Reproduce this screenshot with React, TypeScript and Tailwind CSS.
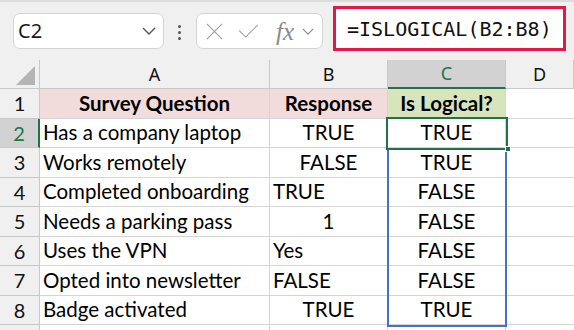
import React from "react"

const cols = ["A", "B", "C", "D"]

type Cell = { v: string; align: "left" | "center" }

const rows: { q: string; r: Cell; c: string }[] = [
  { q: "Has a company laptop", r: { v: "TRUE", align: "center" }, c: "TRUE" },
  { q: "Works remotely", r: { v: "FALSE", align: "center" }, c: "TRUE" },
  { q: "Completed onboarding", r: { v: "TRUE", align: "left" }, c: "FALSE" },
  { q: "Needs a parking pass", r: { v: "1", align: "center" }, c: "FALSE" },
  { q: "Uses the VPN", r: { v: "Yes", align: "left" }, c: "FALSE" },
  { q: "Opted into newsletter", r: { v: "FALSE", align: "left" }, c: "FALSE" },
  { q: "Badge activated", r: { v: "TRUE", align: "center" }, c: "TRUE" },
]

const cellFont = { fontFamily: "Lato, 'Open Sans', sans-serif" }

const Chevron = ({ className }: { className?: string }) => (
  <svg viewBox="0 0 14 8" className={className} fill="none" stroke="currentColor" strokeWidth="1.4">
    <path d="M1 1l6 6 6-6" />
  </svg>
)

const FormulaBar = () => (
  <div className="relative h-[60px] bg-[#f0f0f0] flex items-center border-t-2 border-[#dcdcdc]">
    <div className="absolute left-[13px] top-[11px] w-[151px] h-[36px] bg-white border border-[#d4d4d4] rounded-[7px] flex items-center justify-between pl-[4px] pr-[7px]">
      <span className="text-[20px] text-[#1a1a1a] font-['Noto_Sans',sans-serif]">C2</span>
      <Chevron className="w-[14px] h-[8px] text-[#555]" />
    </div>
    <div className="absolute left-[178px] top-[23px] flex flex-col gap-[3px]">
      <span className="w-[3px] h-[3px] rounded-full bg-[#555]" />
      <span className="w-[3px] h-[3px] rounded-full bg-[#555]" />
      <span className="w-[3px] h-[3px] rounded-full bg-[#555]" />
    </div>
    <div className="absolute left-[196px] top-[11px] w-[127px] h-[36px] bg-white border border-[#d4d4d4] rounded-[7px] flex items-center pl-[9px]">
      <svg viewBox="0 0 18 18" className="w-[17px] h-[17px]" fill="none" stroke="#a0a0a0" strokeWidth="1.2">
        <path d="M1 1l16 16M17 1L1 17" />
      </svg>
      <svg viewBox="0 0 22 15" className="w-[21px] h-[14px] ml-[15px]" fill="none" stroke="#a0a0a0" strokeWidth="1.2">
        <path d="M1 7l7 7L21 1" />
      </svg>
      <span className="ml-[17px] text-[25px] italic text-[#8a8a8a] leading-none" style={{ fontFamily: "'Liberation Serif', serif" }}>fx</span>
      <Chevron className="w-[12px] h-[7px] text-[#8a8a8a] ml-[8px]" />
    </div>
    <div className="absolute left-[333px] top-[4px] w-[233px] h-[45px] bg-white border-[3px] border-[#e0194a] flex items-center pl-[11px]">
      <span className="text-[20px] text-[#111]" style={{ fontFamily: "'DejaVu Sans Mono', monospace" }}>=ISLOGICAL(B2:B8)</span>
    </div>
  </div>
)

export default function App() {
  return (
    <div className="w-[574px] h-[330px] overflow-hidden bg-white">
      <FormulaBar />
      <div className="relative">
        <div className="grid" style={{ gridTemplateColumns: "40px 230px 118px 118px 68px", gridTemplateRows: "29px repeat(8, 29.5px) 20px" }}>
          <div className="bg-[#f0f0f0] border-r border-b border-[#c8c8c8] relative">
            <svg viewBox="0 0 20 20" className="absolute left-[16px] top-[6px] w-[19px] h-[19px]">
              <polygon points="20,0 20,20 0,20" fill="#b4b4b4" />
            </svg>
          </div>
          {cols.map((c) => (
            <div
              key={c}
              className={
                c === "C"
                  ? "bg-[#d2d2d2] border-r border-[#c8c8c8] border-b-2 border-b-[#217346] flex items-center justify-center text-[#217346] text-[18px]"
                  : "bg-[#f0f0f0] border-r border-b border-[#c8c8c8] flex items-center justify-center text-[#111] text-[18px]"
              }
              style={{ fontFamily: "'Noto Sans', sans-serif" }}
            >
              {c}
            </div>
          ))}

          <div className="bg-[#f0f0f0] border-r border-b border-[#c8c8c8] flex items-center justify-center text-[20px] text-[#111]" style={cellFont}>1</div>
          <div className="bg-[#f2dcdb] border-r border-b border-[#d4d4d4] flex items-center justify-center font-bold text-[20.5px]" style={cellFont}>Survey Question</div>
          <div className="bg-[#f2dcdb] border-r border-b border-[#d4d4d4] flex items-center justify-center font-bold text-[20.5px]" style={cellFont}>Response</div>
          <div className="bg-[#d8e4bc] border-r border-b border-[#d4d4d4] flex items-center justify-center font-bold text-[20.5px]" style={cellFont}>Is Logical?</div>
          <div className="border-b border-[#d4d4d4]" />

          {rows.map((row, i) => {
            const n = i + 2
            const sel = n === 2
            return (
              <React.Fragment key={n}>
                <div
                  className={
                    sel
                      ? "bg-[#d2d2d2] border-r-2 border-r-[#217346] border-b border-b-[#c8c8c8] flex items-center justify-center text-[20px] text-[#217346]"
                      : "bg-[#f0f0f0] border-r border-b border-[#c8c8c8] flex items-center justify-center text-[20px] text-[#111]"
                  }
                  style={cellFont}
                >
                  {n}
                </div>
                <div className="border-r border-b border-[#d4d4d4] flex items-center pl-[3px] text-[20.5px] text-black" style={cellFont}>{row.q}</div>
                <div
                  className={
                    "border-r border-b border-[#d4d4d4] flex items-center text-[20.5px] text-black " +
                    (row.r.align === "center" ? "justify-center" : "pl-[3px]")
                  }
                  style={cellFont}
                >
                  {row.r.v}
                </div>
                <div className="border-r border-b border-[#d4d4d4] flex items-center justify-center text-[20.5px] text-black" style={cellFont}>{row.c}</div>
                <div className="border-b border-[#d4d4d4]" />
              </React.Fragment>
            )
          })}
          <div className="bg-[#f0f0f0] border-r border-[#c8c8c8]" />
          <div className="border-r border-[#d4d4d4]" />
          <div className="border-r border-[#d4d4d4]" />
          <div className="border-r border-[#d4d4d4]" />
          <div />
        </div>
        {/* blue range outline C3:C8 */}
        <div className="absolute left-[387px] top-[88px] w-[120px] h-[179px] border-2 border-[#4472c4] pointer-events-none" />
        {/* active cell C2 */}
        <div className="absolute left-[386px] top-[57px] w-[122px] h-[33px] border-[2.5px] border-[#217346] pointer-events-none" />
        <div className="absolute left-[505px] top-[86px] w-[6px] h-[6px] bg-[#217346] border border-white pointer-events-none" />
      </div>
    </div>
  )
}
